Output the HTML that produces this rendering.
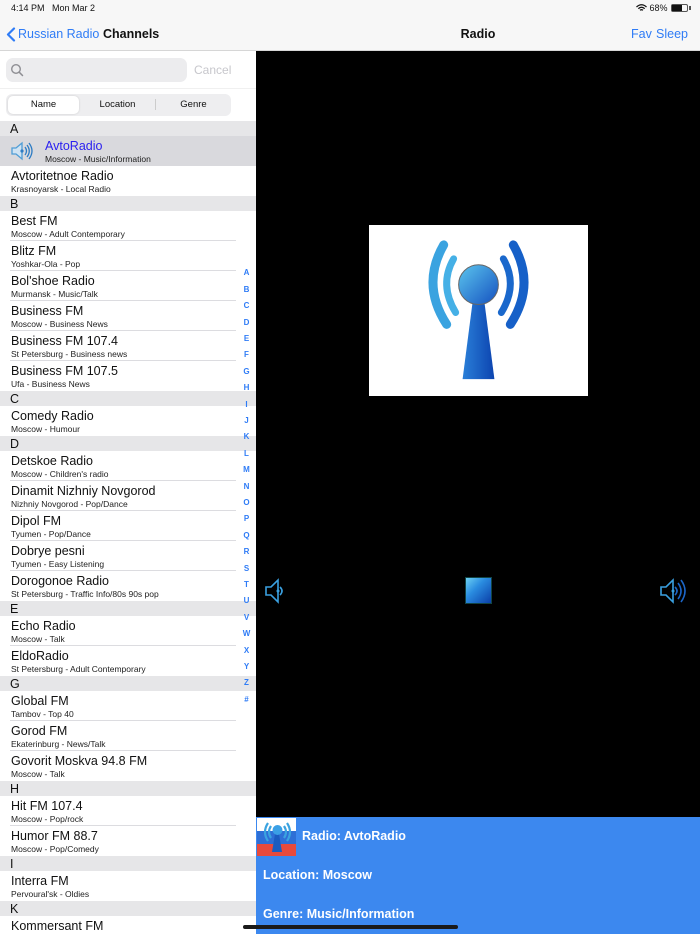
<!DOCTYPE html>
<html><head><meta charset="utf-8"><style>
*{margin:0;padding:0;box-sizing:border-box}
body{width:700px;height:934px;overflow:hidden;background:#fff;font-family:"Liberation Sans",sans-serif;position:relative}
.abs{position:absolute}
#left{left:0;top:0;width:256px;height:934px;background:#fff;overflow:hidden}
#right{left:256px;top:0;width:444px;height:934px;background:#000}
.hdr{position:absolute;left:0;width:256px;height:15px;background:#e6e6e8;font-size:12.5px;line-height:16px;padding-left:10px;color:#111}
.row{position:absolute;left:0;width:256px;height:30px}
.row .t{position:absolute;left:11px;top:3px;font-size:12.5px;color:#111;white-space:nowrap}
.row .s{position:absolute;left:11px;top:18px;font-size:8.5px;color:#222;white-space:nowrap}
.row .ln{position:absolute;left:10px;right:20px;bottom:0;height:1px;background:#dcdce0}
.idx{position:absolute;left:240px;width:13px;text-align:center;font-size:8px;color:#2f7cf6;font-weight:bold}
</style></head><body>
<div id="left" class="abs">
  <div class="abs" style="left:0;top:0;width:256px;height:51px;background:#f7f7f7;border-bottom:1px solid #d6d6d6"></div>
  <div class="abs" style="left:11px;top:3px;font-size:9px;color:#111">4:14 PM&nbsp;&nbsp;&nbsp;Mon Mar 2</div>
  <svg class="abs" style="left:6px;top:27px" width="10" height="15" viewBox="0 0 10 15"><path d="M8 1.5 L2 7.5 L8 13.5" stroke="#2f7cf6" stroke-width="2.2" fill="none" stroke-linecap="round" stroke-linejoin="round"/></svg>
  <div class="abs" style="left:18px;top:27px;font-size:12.5px;color:#2f7cf6">Russian Radio</div>
  <div class="abs" style="left:103px;top:27px;font-size:12.5px;color:#111;font-weight:bold">Channels</div>
  <div class="abs" style="left:6px;top:58px;width:181px;height:24px;background:#ececee;border-radius:7px"></div>
  <svg class="abs" style="left:10px;top:63px" width="14" height="14" viewBox="0 0 14 14"><circle cx="6" cy="6" r="4.3" stroke="#8e8e93" stroke-width="1.4" fill="none"/><path d="M9.2 9.2 L12.5 12.5" stroke="#8e8e93" stroke-width="1.5" stroke-linecap="round"/></svg>
  <div class="abs" style="left:194px;top:63px;font-size:12px;color:#c7c7cc">Cancel</div>
  <div class="abs" style="left:0;top:88px;width:256px;height:1px;background:#f0f0f0"></div>
  <div class="abs" style="left:6px;top:94px;width:225px;height:22px;background:#eeeef0;border-radius:6px"></div>
  <div class="abs" style="left:8px;top:96px;width:71px;height:18px;background:#fff;border-radius:5px;box-shadow:0 0 2px rgba(0,0,0,.15)"></div>
  <div class="abs" style="left:155px;top:99px;width:1px;height:11px;background:#ccc"></div>
  <div class="abs" style="left:8px;top:99px;width:71px;text-align:center;font-size:9.5px;color:#111">Name</div>
  <div class="abs" style="left:80px;top:99px;width:75px;text-align:center;font-size:9.5px;color:#111">Location</div>
  <div class="abs" style="left:156px;top:99px;width:75px;text-align:center;font-size:9.5px;color:#111">Genre</div>

  <div class="hdr" style="top:121px">A</div>
  <div class="row" style="top:136px;background:#d9d9dd">
    <svg class="abs" style="left:11px;top:5px" width="24" height="20" viewBox="0 0 24 20"><path d="M1 7 H5 L11 2 V18 L5 13 H1 Z" fill="#cfe3f3" stroke="#4f9dd6" stroke-width="1.3"/><path d="M14 6 Q17 10 14 14 M16 4 Q20.5 10 16 16 M18 2 Q24 10 18 18" stroke="#2d7cc4" stroke-width="1.3" fill="none"/><circle cx="11" cy="10" r="1.6" fill="#2d7cc4"/></svg>
    <div class="t" style="left:45px;color:#2a1ff0">AvtoRadio</div><div class="s" style="left:45px">Moscow - Music/Information</div></div>
  <div class="row" style="top:166px"><div class="t">Avtoritetnoe Radio</div><div class="s">Krasnoyarsk - Local Radio</div></div>
  <div class="hdr" style="top:196px">B</div>
  <div class="row" style="top:211px"><div class="t">Best FM</div><div class="s">Moscow - Adult Contemporary</div><div class="ln"></div></div>
  <div class="row" style="top:241px"><div class="t">Blitz FM</div><div class="s">Yoshkar-Ola - Pop</div><div class="ln"></div></div>
  <div class="row" style="top:271px"><div class="t">Bol'shoe Radio</div><div class="s">Murmansk - Music/Talk</div><div class="ln"></div></div>
  <div class="row" style="top:301px"><div class="t">Business FM</div><div class="s">Moscow - Business News</div><div class="ln"></div></div>
  <div class="row" style="top:331px"><div class="t">Business FM 107.4</div><div class="s">St Petersburg - Business news</div><div class="ln"></div></div>
  <div class="row" style="top:361px"><div class="t">Business FM 107.5</div><div class="s">Ufa - Business News</div></div>
  <div class="hdr" style="top:391px">C</div>
  <div class="row" style="top:406px"><div class="t">Comedy Radio</div><div class="s">Moscow - Humour</div></div>
  <div class="hdr" style="top:436px">D</div>
  <div class="row" style="top:451px"><div class="t">Detskoe Radio</div><div class="s">Moscow - Children's radio</div><div class="ln"></div></div>
  <div class="row" style="top:481px"><div class="t">Dinamit Nizhniy Novgorod</div><div class="s">Nizhniy Novgorod - Pop/Dance</div><div class="ln"></div></div>
  <div class="row" style="top:511px"><div class="t">Dipol FM</div><div class="s">Tyumen - Pop/Dance</div><div class="ln"></div></div>
  <div class="row" style="top:541px"><div class="t">Dobrye pesni</div><div class="s">Tyumen - Easy Listening</div><div class="ln"></div></div>
  <div class="row" style="top:571px"><div class="t">Dorogonoe Radio</div><div class="s">St Petersburg - Traffic Info/80s 90s pop</div></div>
  <div class="hdr" style="top:601px">E</div>
  <div class="row" style="top:616px"><div class="t">Echo Radio</div><div class="s">Moscow - Talk</div><div class="ln"></div></div>
  <div class="row" style="top:646px"><div class="t">EldoRadio</div><div class="s">St Petersburg - Adult Contemporary</div></div>
  <div class="hdr" style="top:676px">G</div>
  <div class="row" style="top:691px"><div class="t">Global FM</div><div class="s">Tambov - Top 40</div><div class="ln"></div></div>
  <div class="row" style="top:721px"><div class="t">Gorod FM</div><div class="s">Ekaterinburg - News/Talk</div><div class="ln"></div></div>
  <div class="row" style="top:751px"><div class="t">Govorit Moskva 94.8 FM</div><div class="s">Moscow - Talk</div></div>
  <div class="hdr" style="top:781px">H</div>
  <div class="row" style="top:796px"><div class="t">Hit FM 107.4</div><div class="s">Moscow - Pop/rock</div><div class="ln"></div></div>
  <div class="row" style="top:826px"><div class="t">Humor FM 88.7</div><div class="s">Moscow - Pop/Comedy</div></div>
  <div class="hdr" style="top:856px">I</div>
  <div class="row" style="top:871px"><div class="t">Interra FM</div><div class="s">Pervoural'sk - Oldies</div></div>
  <div class="hdr" style="top:901px">K</div>
  <div class="row" style="top:916px"><div class="t">Kommersant FM</div></div>

  <div class="idx" style="top:268px">A</div><div class="idx" style="top:285px">B</div><div class="idx" style="top:301px">C</div><div class="idx" style="top:318px">D</div><div class="idx" style="top:334px">E</div><div class="idx" style="top:350px">F</div><div class="idx" style="top:367px">G</div><div class="idx" style="top:383px">H</div><div class="idx" style="top:400px">I</div><div class="idx" style="top:416px">J</div><div class="idx" style="top:432px">K</div><div class="idx" style="top:449px">L</div><div class="idx" style="top:465px">M</div><div class="idx" style="top:482px">N</div><div class="idx" style="top:498px">O</div><div class="idx" style="top:514px">P</div><div class="idx" style="top:531px">Q</div><div class="idx" style="top:547px">R</div><div class="idx" style="top:564px">S</div><div class="idx" style="top:580px">T</div><div class="idx" style="top:596px">U</div><div class="idx" style="top:613px">V</div><div class="idx" style="top:629px">W</div><div class="idx" style="top:646px">X</div><div class="idx" style="top:662px">Y</div><div class="idx" style="top:678px">Z</div><div class="idx" style="top:695px">#</div>
</div>

<div id="right" class="abs">
  <div class="abs" style="left:0;top:0;width:444px;height:51px;background:#f7f7f7;border-bottom:1px solid #d6d6d6"></div>
  <div class="abs" style="left:380px;top:3px;font-size:9px;color:#111">
    <svg width="11" height="8" viewBox="0 0 11 8" style="vertical-align:-1px"><path d="M0.5 3 Q5.5 -1.5 10.5 3 M2.3 4.7 Q5.5 1.8 8.7 4.7 M4 6.3 Q5.5 5 7 6.3" stroke="#111" stroke-width="1.3" fill="none"/></svg> 68%</div>
  <div class="abs" style="left:415px;top:4px;width:17px;height:8px;border:1px solid #555;border-radius:2px"><div style="width:10px;height:6px;background:#111"></div></div>
  <div class="abs" style="left:433px;top:6px;width:2px;height:4px;background:#555"></div>
  <div class="abs" style="left:0;top:27px;width:444px;text-align:center;font-size:12.5px;color:#111;font-weight:bold">Radio</div>
  <div class="abs" style="left:375px;top:27px;font-size:12.5px;color:#2f7cf6">Fav</div>
  <div class="abs" style="left:400px;top:27px;font-size:12.5px;color:#2f7cf6">Sleep</div>

  <div class="abs" style="left:113px;top:225px;width:219px;height:171px;background:#fff">
    <svg width="219" height="171" viewBox="0 0 220 172">
      <defs><linearGradient id="g1" x1="0" y1="0" x2="1" y2="1"><stop offset="0" stop-color="#5cc6ee"/><stop offset="1" stop-color="#1450c0"/></linearGradient>
      <linearGradient id="g2" x1="0" y1="0" x2="1" y2="0"><stop offset="0" stop-color="#2a7fd8"/><stop offset="1" stop-color="#0c44b0"/></linearGradient></defs>
      <path d="M75 20 Q52 60 78 100" stroke="#3aa3e0" stroke-width="9" fill="none" stroke-linecap="round"/>
      <path d="M85 34 Q70 60 87 88" stroke="#45b0e6" stroke-width="7" fill="none" stroke-linecap="round"/>
      <path d="M145 20 Q168 60 142 100" stroke="#1660c8" stroke-width="9" fill="none" stroke-linecap="round"/>
      <path d="M135 34 Q150 60 133 88" stroke="#1a68cc" stroke-width="7" fill="none" stroke-linecap="round"/>
      <path d="M104 78 L116 78 L126 155 L94 155 Z" fill="url(#g2)"/>
      <circle cx="110" cy="60" r="20" fill="url(#g1)" stroke="#666" stroke-width="1"/>
    </svg>
  </div>

  <svg class="abs" style="left:8px;top:577px" width="28" height="28" viewBox="0 0 28 28"><path d="M2 10 H7 L14 3 V25 L7 18 H2 Z" fill="none" stroke="#3aa0e0" stroke-width="1.6"/><path d="M16 10 Q20 14 16 18" stroke="#3aa0e0" stroke-width="1.6" fill="none"/><circle cx="14" cy="14" r="1.5" fill="#3aa0e0"/></svg>
  <div class="abs" style="left:209px;top:577px;width:27px;height:27px;background:linear-gradient(135deg,#6cd0f3 0%,#2a8ce0 40%,#0a3fa8 100%);border:1px solid #144"></div>
  <svg class="abs" style="left:403px;top:577px" width="34" height="28" viewBox="0 0 34 28"><path d="M2 10 H7 L14 3 V25 L7 18 H2 Z" fill="none" stroke="#3aa0e0" stroke-width="1.6"/><path d="M16 10 Q20 14 16 18 M19 6 Q25 14 19 22 M22 3 Q30 14 22 25" stroke="#1c66c8" stroke-width="1.6" fill="none"/><circle cx="14" cy="14" r="1.5" fill="#3aa0e0"/></svg>

  <div class="abs" style="left:0;top:817px;width:444px;height:117px;background:#3c88ef"></div>
  <div class="abs" style="left:1px;top:818px;width:39px;height:38px">
    <div style="height:13px;background:#fff"></div><div style="height:13px;background:#2e6fd6"></div><div style="height:12px;background:#e84a3c"></div>
    <svg class="abs" style="left:0;top:0" width="39" height="38" viewBox="0 0 39 38"><path d="M11 5 Q5 14 11 23 M30 5 Q36 14 30 23 M14 8 Q10 14 14 20 M27 8 Q31 14 27 20" stroke="#3aa3e0" stroke-width="2.2" fill="none"/><path d="M18 16 L22 16 L25 34 L15 34 Z" fill="#1a5cc0"/><circle cx="20.5" cy="12" r="5" fill="#3aa0e6"/></svg>
  </div>
  <div class="abs" style="left:46px;top:829px;font-size:12.5px;color:#fff;font-weight:bold">Radio: AvtoRadio</div>
  <div class="abs" style="left:7px;top:868px;font-size:12.5px;color:#fff;font-weight:bold">Location: Moscow</div>
  <div class="abs" style="left:7px;top:907px;font-size:12.5px;color:#fff;font-weight:bold">Genre: Music/Information</div>
</div>
<div class="abs" style="left:243px;top:925px;width:215px;height:4px;border-radius:2px;background:#1a1a1a"></div>
</body></html>
